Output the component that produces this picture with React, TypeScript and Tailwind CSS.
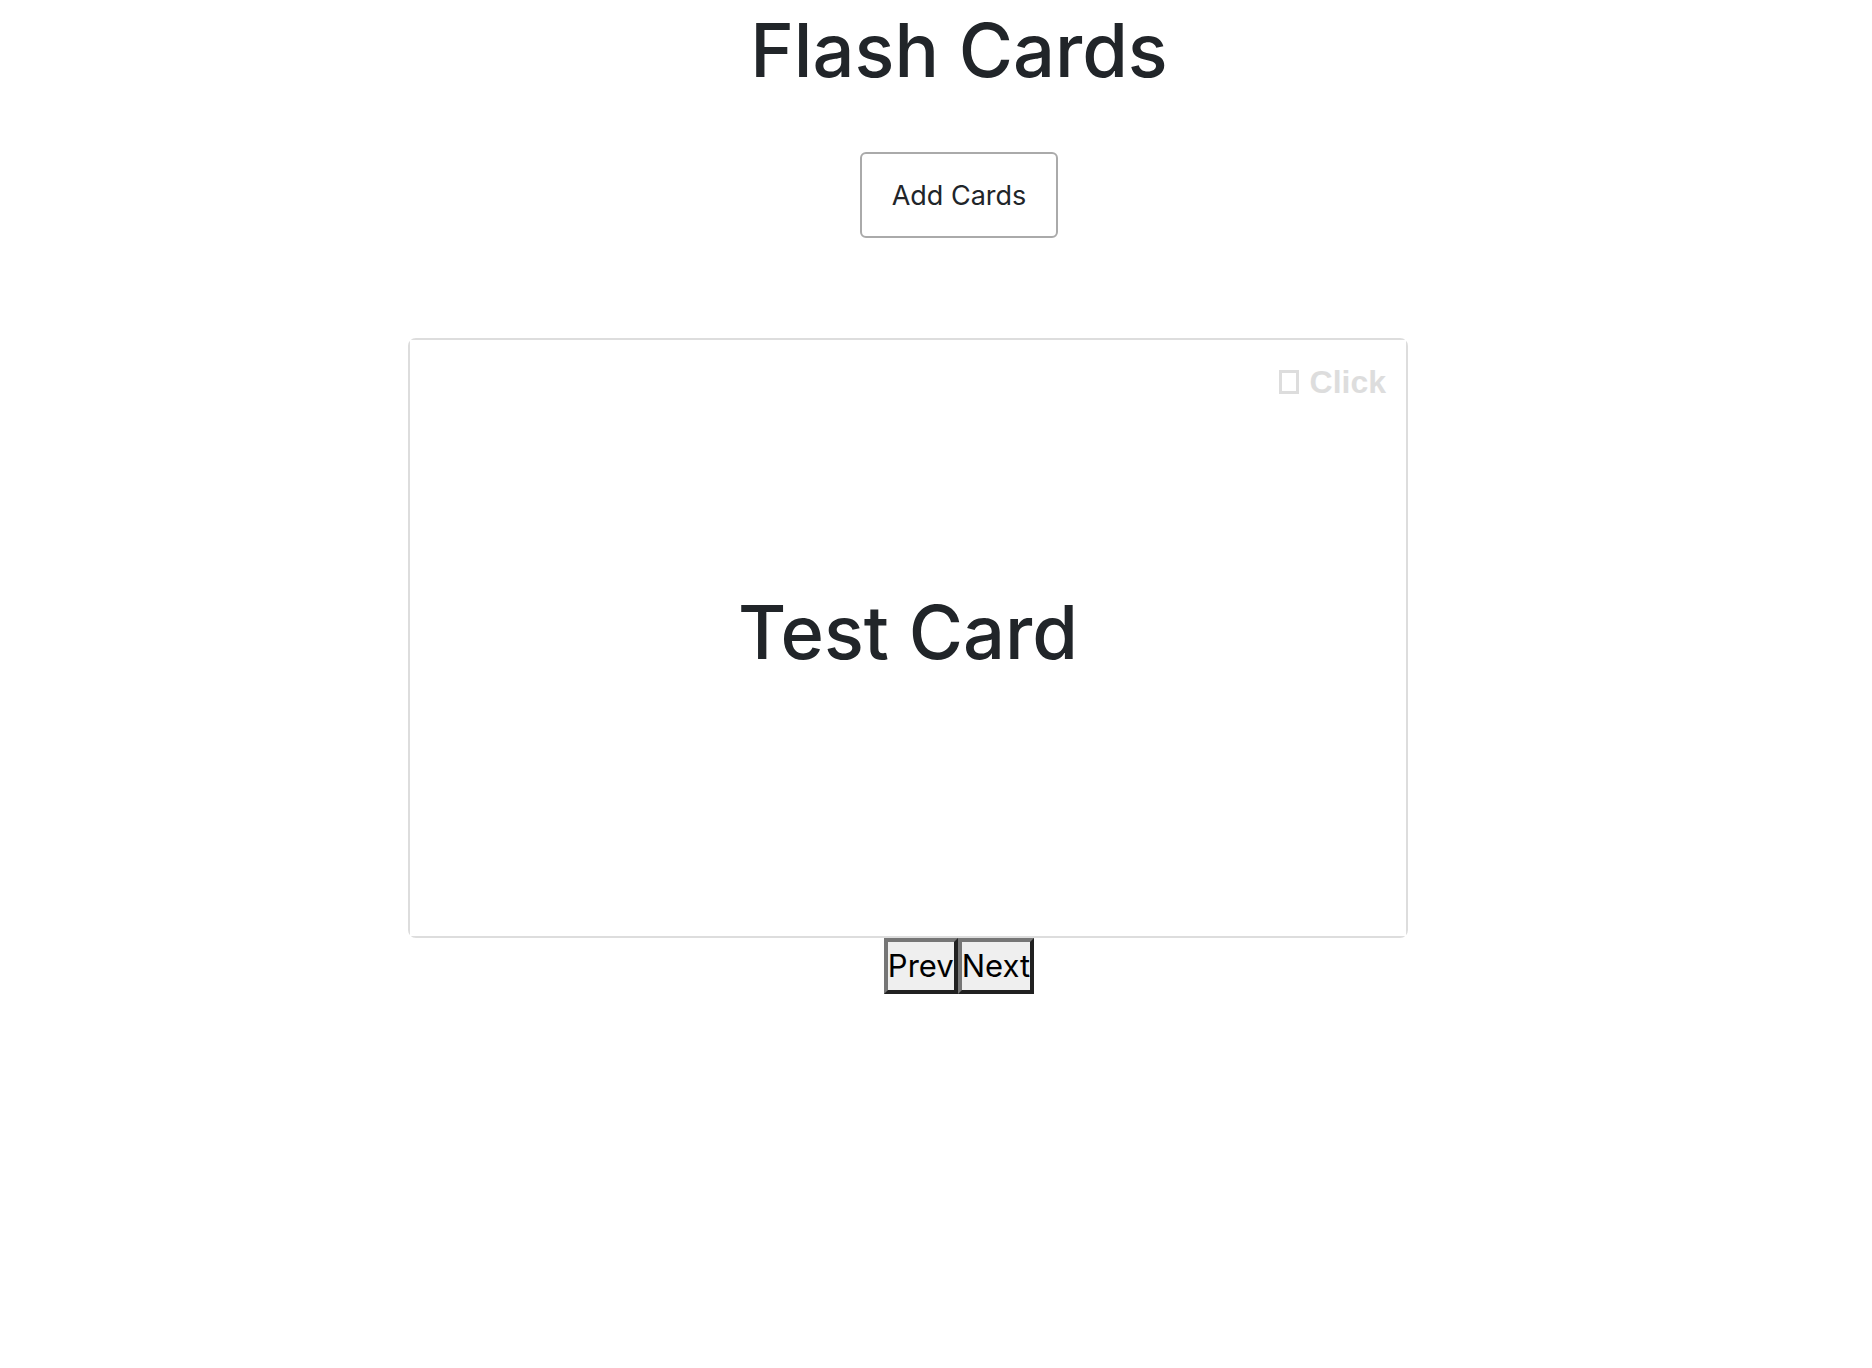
import { useState } from "react";

const cards = ["Test Card"];

export default function App() {
  const [index, setIndex] = useState(0);
  const step = (delta: number) =>
    setIndex((index + delta + cards.length) % cards.length);

  const navButton =
    "border-4 border-t-[#767676] border-l-[#767676] border-r-[#212121] border-b-[#212121] bg-[#efefef] text-[31px] leading-[48px] text-black";

  return (
    <main className="flex min-h-screen flex-col items-center bg-white pl-[46px] font-['Inter',sans-serif] text-[#212529]">
      <h1 className="text-[74px] leading-[100px] font-medium">Flash Cards</h1>
      <button
        type="button"
        className="mt-[52px] rounded-md border-2 border-[#aaaaaa] px-[30px] pt-[21px] pb-[19px] text-[27px] leading-[42px]"
      >
        Add Cards
      </button>
      <section className="mt-[100px] mr-[102px] w-full max-w-[1000px] rounded-lg border-2 border-[#dddddd]">
        <div className="relative flex min-h-[596px] items-center justify-center bg-white pb-3">
          <button
            type="button"
            className="absolute top-[18px] right-5 flex items-center gap-[11px] font-['Liberation_Sans',sans-serif] text-[32px] leading-[48px] font-bold text-[#dddddd]"
          >
            <span className="h-6 w-5 border-3 border-[#dddddd]" />
            Click
          </button>
          <h2 className="text-[74px] leading-[100px] font-medium">{cards[index]}</h2>
        </div>
      </section>
      <nav className="flex" aria-label="Cards">
        <button type="button" className={navButton} onClick={() => step(-1)}>
          Prev
        </button>
        <button type="button" className={navButton} onClick={() => step(1)}>
          Next
        </button>
      </nav>
    </main>
  );
}
